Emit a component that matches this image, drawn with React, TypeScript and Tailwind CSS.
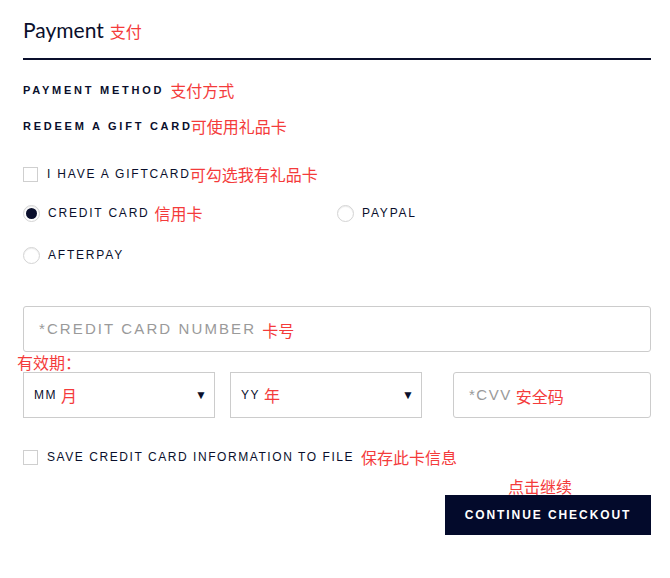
import { ReactNode } from 'react'

const NAVY = 'text-[#0a0f2c]'

function Note({ children, className = '' }: { children: ReactNode; className?: string }) {
  return (
    <span className={`font-['Noto_Sans_CJK_SC',sans-serif] text-[16px] leading-none tracking-normal font-normal text-[#f43b3b] ${className}`}>
      {children}
    </span>
  )
}

function Box() {
  return <span className="w-[15px] h-[15px] border border-[#cfcfcf] bg-white shrink-0" />
}

function Radio({ on = false }: { on?: boolean }) {
  return (
    <span className="w-[17px] h-[17px] rounded-full border border-[#d4d4d4] bg-white shrink-0 flex items-center justify-center shadow-[inset_0_1px_1px_rgba(0,0,0,0.08)]">
      {on && <span className="w-[11px] h-[11px] rounded-full bg-[#0a0f2c]" />}
    </span>
  )
}

function Select({ label, note }: { label: string; note: string }) {
  return (
    <div className="w-[192px] h-[46px] border border-[#cccccc] flex items-center pl-[10px] pr-[7px]">
      <span className={`text-[12px] tracking-[0.12em] ${NAVY}`}>{label}</span>
      <Note className="ml-[4px]">{note}</Note>
      <span className={`ml-auto text-[12px] ${NAVY}`}>▼</span>
    </div>
  )
}

export default function App() {
  return (
    <div className="w-[670px] h-[578px] bg-white font-['Liberation_Sans',Arial,sans-serif] overflow-hidden">
      <div className="ml-[23px] w-[628px] flex flex-col">
        <div className="h-[60px] flex items-center border-b-2 border-[#0a0f2c] pt-[2px]">
          <span className={`font-['Lato',sans-serif] font-normal text-[21px] ${NAVY}`}>Payment</span>
          <Note className="ml-[6px] mt-[2px]">支付</Note>
        </div>

        <div className="mt-[22px] flex items-center h-[16px]">
          <span className={`text-[11px] font-bold tracking-[0.25em] ${NAVY}`}>PAYMENT METHOD</span>
          <Note className="ml-[6px]">支付方式</Note>
        </div>

        <div className="mt-[20px] flex items-center h-[16px]">
          <span className={`text-[11px] font-bold tracking-[0.25em] ${NAVY}`}>REDEEM A GIFT CARD</span>
          <Note className="-ml-[2px]">可使用礼品卡</Note>
        </div>

        <div className="mt-[32px] flex items-center h-[16px]">
          <Box />
          <span className={`ml-[9px] text-[12px] tracking-[0.15em] ${NAVY}`}>I HAVE A GIFTCARD</span>
          <Note className="-ml-[1px]">可勾选我有礼品卡</Note>
        </div>

        <div className="mt-[22px] grid grid-cols-[314px_1fr] h-[18px]">
          <div className="flex items-center">
            <Radio on />
            <span className={`ml-[8px] text-[12px] tracking-[0.15em] ${NAVY}`}>CREDIT CARD</span>
            <Note className="ml-[5px]">信用卡</Note>
          </div>
          <div className="flex items-center">
            <Radio />
            <span className={`ml-[8px] text-[12px] tracking-[0.15em] ${NAVY}`}>PAYPAL</span>
          </div>
        </div>

        <div className="mt-[24px] flex items-center h-[18px]">
          <Radio />
          <span className={`ml-[8px] text-[12px] tracking-[0.15em] ${NAVY}`}>AFTERPAY</span>
        </div>

        <div className="mt-[42px] h-[46px] border border-[#cccccc] rounded-[3px] flex items-center pl-[15px]">
          <span className="text-[15px] tracking-[0.14em] text-[#9a9a9a]">*CREDIT CARD NUMBER</span>
          <Note className="ml-[6px] mt-[2px]">卡号</Note>
        </div>

        <div className="h-[20px] flex items-center -ml-[6px]">
          <Note>有效期：</Note>
        </div>

        <div className="flex items-center">
          <Select label="MM" note="月" />
          <div className="ml-[15px]">
            <Select label="YY" note="年" />
          </div>
          <div className="ml-auto w-[198px] h-[46px] border border-[#cccccc] rounded-[3px] flex items-center pl-[15px]">
            <span className="text-[15px] tracking-[0.1em] text-[#9a9a9a]">*CVV</span>
            <Note className="ml-[4px] mt-[2px]">安全码</Note>
          </div>
        </div>

        <div className="mt-[31px] flex items-center h-[16px]">
          <Box />
          <span className={`ml-[9px] text-[12px] tracking-[0.13em] ${NAVY}`}>SAVE CREDIT CARD INFORMATION TO FILE</span>
          <Note className="ml-[7px]">保存此卡信息</Note>
        </div>

        <div className="mt-[13px] flex flex-col items-end">
          <Note className="mr-[79px]">点击继续</Note>
          <button className="mt-[1px] w-[206px] h-[40px] bg-[#030a2b] text-white text-[12px] font-bold tracking-[0.16em]">
            CONTINUE CHECKOUT
          </button>
        </div>
      </div>
    </div>
  )
}
